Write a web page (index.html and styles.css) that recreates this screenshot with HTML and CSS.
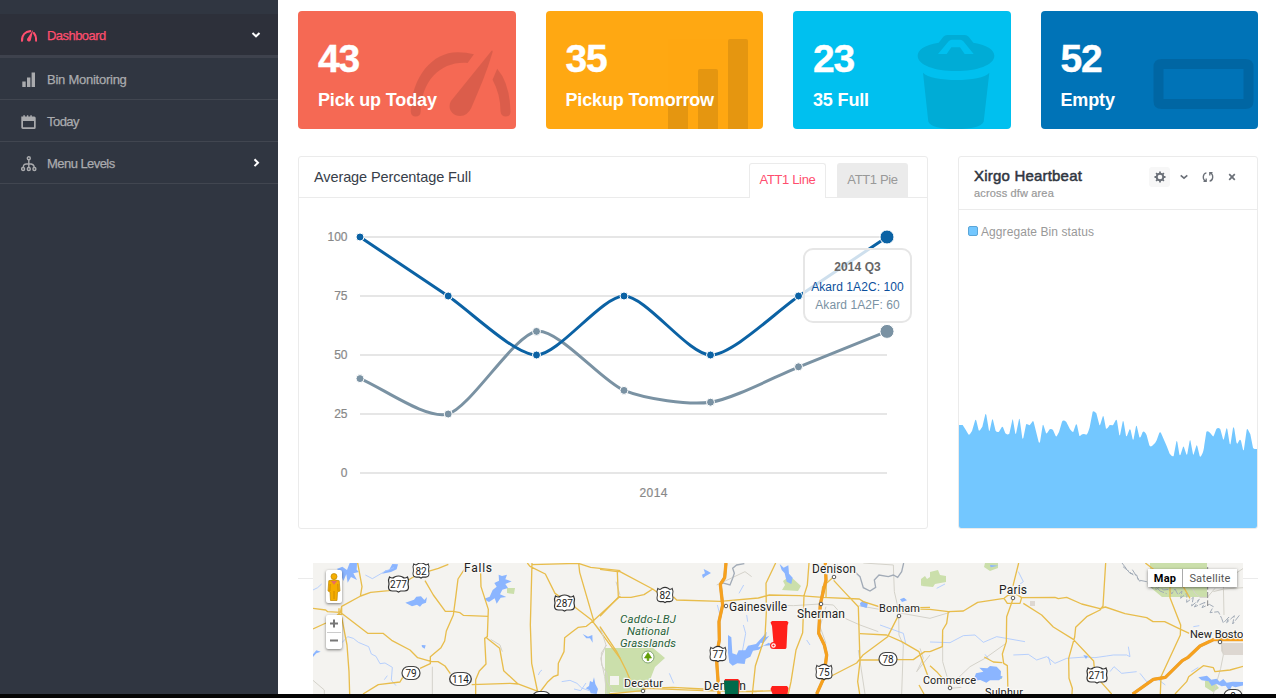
FILE: index.html
```html
<!DOCTYPE html>
<html lang="en">
<head>
<meta charset="utf-8">
<title>Dashboard</title>
<link rel="stylesheet" href="styles.css">
</head>
<body>
<div class="layout">
  <nav class="sidebar">
    <a class="nav-item active">
      <svg class="nav-icon" viewBox="0 0 16 16"><path d="M1 12.700C.9 7 4.500 3.500 9.300 3.200" fill="none" stroke="currentColor" stroke-width="2.200" stroke-linecap="round"/><path d="M12.200 1.800 9.800 12.300a2 2 0 0 1-3.800-1.200z" fill="currentColor"/><path d="M12.900 5c1.700 2 2.300 4.500 2.200 7.700" fill="none" stroke="currentColor" stroke-width="2" stroke-linecap="round"/></svg>
      <span class="nav-label">Dashboard</span>
      <svg class="nav-arrow" viewBox="0 0 10 10"><path d="M1.500 3 5 6.300 8.500 3" fill="none" stroke="currentColor" stroke-width="2"/></svg>
    </a>
    <a class="nav-item">
      <svg class="nav-icon" viewBox="0 0 16 16"><path d="M1.300 9.500h3.400V15H1.300zM6 5.500h3.400V15H6zM10.600.5H14V15h-3.400z" fill="currentColor"/></svg>
      <span class="nav-label wide">Bin Monitoring</span>
    </a>
    <a class="nav-item">
      <svg class="nav-icon" viewBox="0 0 16 16"><path d="M.3 2.500h2V1.200h1.600v1.300h2V1.200h1.400v1.300h2V1.200h1.500v1.300h2.400q1.500 0 1.500 1.500v9.500q0 1.500-1.500 1.500h-11Q.5 15 .3 13.500zM2 7v6.300h11V7z" fill="currentColor"/></svg>
      <span class="nav-label">Today</span>
    </a>
    <a class="nav-item">
      <svg class="nav-icon" viewBox="0 0 16 16"><g fill="none" stroke="currentColor" stroke-width="1.400"><circle cx="7.800" cy="2.300" r="1.500"/><circle cx="2.100" cy="13" r="1.500"/><circle cx="7.800" cy="13" r="1.500"/><circle cx="13.400" cy="13" r="1.500"/><path d="M7.800 4v7.500M2.300 11.300c0-2.800 1.600-3.600 5.500-3.600s5.400.8 5.400 3.600"/></g></svg>
      <span class="nav-label">Menu Levels</span>
      <svg class="nav-arrow" viewBox="0 0 10 10"><path d="M3.500 1.300 7 4.700 3.500 8.100" fill="none" stroke="currentColor" stroke-width="2"/></svg>
    </a>
  </nav>
  <main class="content">
    <section class="stats">
      <div class="stat red">
        <svg class="stat-icon" viewBox="298 11 218 118"><g transform="translate(290)scale(.33333)"><path d="M363 335C366 228 430 156 505 157q26 0 48 6L534 189C456 183 395 239 393 335q-1 15-15 15t-15-15z"/><path d="M606 152Q610 149 609 157C593 214 569 268 545 324Q533 348 512 348C486 348 472 324 484 303z"/><path d="M623 206Q661 250 663 335q0 15-14 15t-16-15Q633 283 609 239z"/></g></svg>
        <strong>43</strong><span>Pick up Today</span>
      </div>
      <div class="stat orange">
        <svg class="stat-icon" viewBox="546 11 217.500 118"><path d="M668 99h20v30h-20z"/><rect x="698" y="69" width="20" height="70" rx="2"/><rect x="728" y="39" width="20" height="100" rx="2"/></svg>
        <strong>35</strong><span>Pickup Tomorrow</span>
      </div>
      <div class="stat cyan">
        <svg class="stat-icon" viewBox="793 11 217.500 118"><g transform="translate(780)scale(.33333)"><path fill-rule="evenodd" d="M476 128 490 110q5-5 12-5h52q7 0 12 5l14 18c43 7 63 22 63 39 0 28-52 46-115 46s-115-18-115-46c0-17 19-32 63-39zM474 162h26l14-20h26l14 20h27L550 124q-4-5-9-5h-26q-5 0-9 5z"/><path d="M429 218C455 247 605 247 628 218L611 365Q600 387 528 387T445 365z"/></g></svg>
        <strong>23</strong><span>35 Full</span>
      </div>
      <div class="stat blue">
        <svg class="stat-icon" viewBox="1040.500 11 217.500 118"><path fill-rule="evenodd" d="M1161 59h84q8 0 8 8v34q0 8-8 8h-84q-8 0-8-8V67q0-8 8-8zm2 10v30h80V69z"/></svg>
        <strong>52</strong><span>Empty</span>
      </div>
    </section>

    <section class="panels">
      <article class="panel">
        <header class="chart-head">
          <h2>Average Percentage Full</h2>
          <div class="tabs"><a class="tab current">ATT1 Line</a><a class="tab">ATT1 Pie</a></div>
        </header>
        <div class="chart-body">
          <svg class="line-chart" viewBox="299 198 628 330">
            <path d="M360 237H887M360 296H887M360 355H887M360 414H887M360 473H887" stroke="#e6e6e6" stroke-width="2"/>
            <g class="axis" text-anchor="end"><text x="347.500" y="241">100</text><text x="347.500" y="300">75</text><text x="347.500" y="359">50</text><text x="347.500" y="418">25</text><text x="347.500" y="477">0</text></g>
            <text class="axis" x="653.500" y="497" text-anchor="middle" textLength="28">2014</text>
            <path class="series-grey" d="M360 378.600C382 387.450 426 419.900 448 414C470 408.100 514.500 334.350 536.500 331.400C558.500 328.450 602 381.550 624 390.400C646 399.250 688.500 405.150 710.500 402.200C732.500 399.250 777 375.650 799 366.800C821 357.950 865 340.250 887 331.400"/>
            <path class="series-blue" d="M360 237C382 251.750 426 281.250 448 296C470 310.750 514.500 355 536.500 355C558.500 355 602 296 624 296C646 296 688.500 355 710.500 355C732.500 355 777 310.750 799 296C821 281.250 865 251.750 887 237"/>
            <g class="dots-grey"><circle cx="360" cy="378.600" r="4"/><circle cx="448.200" cy="414" r="4"/><circle cx="536.500" cy="331.400" r="4"/><circle cx="624" cy="390.400" r="4"/><circle cx="710.500" cy="402.200" r="4"/><circle cx="798.500" cy="366.800" r="4"/><circle cx="887" cy="331.400" r="7"/></g>
            <g class="dots-blue"><circle cx="360" cy="237" r="4"/><circle cx="448.200" cy="296" r="4"/><circle cx="536.500" cy="355" r="4"/><circle cx="624" cy="296" r="4"/><circle cx="710.500" cy="355" r="4"/><circle cx="798.500" cy="296" r="4"/><circle cx="887" cy="237" r="7"/></g>
          </svg>
          <div class="tooltip"><b>2014 Q3</b><span class="tip-blue">Akard 1A2C: 100</span><span class="tip-grey">Akard 1A2F: 60</span></div>
        </div>
      </article>

      <article class="panel">
        <header class="beat-head">
          <div><h3>Xirgo Heartbeat</h3><p>across dfw area</p></div>
          <div class="tools">
            <span class="tool boxed"><svg viewBox="0 0 12 12"><circle cx="6" cy="6" r="3.300" fill="none" stroke="currentColor" stroke-width="2"/><path d="M6 .5v2M6 9.500v2M.5 6h2M9.500 6h2M2.100 2.100l1.300 1.300M8.600 8.600l1.300 1.300M2.100 9.900l1.300-1.300M8.600 3.400l1.300-1.300" stroke="currentColor" stroke-width="1.800"/></svg></span>
            <span class="tool"><svg viewBox="0 0 12 12"><path d="M2.700 4.300 6 7.200l3.300-2.900" fill="none" stroke="currentColor" stroke-width="1.600"/></svg></span>
            <span class="tool"><svg viewBox="0 0 12 12"><g fill="none" stroke="currentColor" stroke-width="1.300"><path d="M4.400 1.800C.5 2.500.3 8.500 3.500 10M7.600 10.200c3.900-.7 4.100-6.700.9-8.200M1.500 10.300h2.700V7.500M10.500 1.700H7.800v2.800"/></g></svg></span>
            <span class="tool"><svg viewBox="0 0 12 12"><path d="m3.200 3.200 5.600 5.600M8.800 3.200 3.200 8.800" stroke="currentColor" stroke-width="1.700"/></svg></span>
          </div>
        </header>
        <div class="beat-body">
          <div class="legend"><i></i><span>Aggregate Bin status</span></div>
          <svg class="area" viewBox="27 30 894 354" preserveAspectRatio="none"><path d="M27 75H38L47 89 55 103Q57 106 60 102L66 93 75 62Q77 57 79 62L86 91Q88 93 91 89L97 80 106 43Q107 40 109 45L117 92H119L126 60Q127 56 129 60L137 93Q142 98 147 95L155 82Q157 79 159 82L166 100Q172 106 178 101L187 60Q188 56 189 60L196 101H198L207 58Q208 54 209 58L217 115Q218 118 220 114L228 74Q229 71 232 73L239 76 247 65Q249 61 251 66L266 126Q268 131 270 126L278 76Q279 72 281 77L288 99Q290 102 292 98L299 88Q304 85 309 90L317 108Q319 111 321 107L327 96 336 65Q340 58 349 66L360 88Q368 98 370 95L377 75Q379 71 381 75L388 107Q390 110 393 105Q400 100 409 104Q413 104 419 82L428 35Q431 31 439 40L448 74Q449 78 451 73L458 50Q459 46 461 50L468 86Q470 89 479 75L489 76 497 61Q499 57 501 62L508 106H510L518 65Q519 61 521 66L528 107Q530 111 532 105L538 89Q540 85 542 91L548 118Q550 121 551 116L558 79Q560 75 561 81L568 111Q570 115 573 109L578 96Q583 91 590 106L598 136Q600 141 606 138Q617 130 620 121L628 98Q631 94 634 101L650 138 659 161Q668 172 671 168L679 125Q680 120 682 126L688 163Q690 169 692 163L699 141Q701 137 702 142L709 163Q711 166 712 161L719 122Q721 118 722 125L729 163Q731 167 732 160L739 137Q740 133 742 139L749 168Q751 173 755 165Q761 155 763 134L769 96Q771 91 780 98L788 108Q790 111 792 106L799 87Q805 81 811 88L819 117Q821 121 822 116L829 86Q830 82 832 88L839 131Q841 136 842 130L849 84Q851 79 853 87L859 126Q861 133 863 130L868 121Q870 117 873 122L879 149Q881 154 882 147L890 90Q891 85 894 89L901 103 909 143Q911 147 915 147H921V384H27Z"/></svg>
        </div>
      </article>
    </section>

    <section class="map-row">
      <div class="map">
        <svg class="map-canvas" viewBox="313 563 930 131">
          <defs>
            <g id="us-shield"><path d="M-9-7Q-6-5-4-7Q0-9 4-7Q6-5 9-7L10-4Q9 0 10 3Q10 7 6 7H2L0 8-2 7H-6Q-10 7-10 3Q-9 0-10-4Z" fill="#fff" stroke="#333" stroke-width="1.200"/></g>
            <g id="state-shield"><rect x="-9" y="-6.500" width="18" height="13" rx="6.500" fill="#fff" stroke="#444" stroke-width="1.200"/></g>
          </defs>
          <rect x="313" y="563" width="930" height="131" fill="#f4f3f0"/>
          <g class="park">
            <path d="M606 648H653L665 658 655 667 650 680 641 692H610V685H619V676H606Z"/>
            <path d="M605 648h5v46h-5zM783 581l7-5 11 10-3 5-16-1 3-5zM507 588h8l-1 6-7-1zM742 650l6 7-6 3z"/>
            <path d="M930 572l8-2 2 5 6 1v6l-11 2-2 3-11-1 2-6h6zM985 563h13v5l-8 3-6-4zM1150 563h57v34h-45l-12-10z"/>
            <path d="M921 579l4-3 2 3 3-2v8l-5-2-4 3zM988 674l14 2v3l-14 1zM1205 681l8 0 6 7-6 4-8-5z"/>
          </g>
          <path fill="#ddd7d1" d="M1221 643h22v12h-19l-3-4zM1030 601h5v5h-5z"/>
          <g transform="translate(290 555)scale(.33333)">
            <g class="water"><path d="M157 35l14 10 8-21h22l-1 20 7 7-17 4 11 20-18-9-10 17-4-25-9 20-8-21-9 5 7-14-10-6zM346 143l26-9 7-9 14-1 10 11 8-9-3 17-11 4-7 8-9-6-15 5zM583 131l16-6 9-20 12-10-7-11 14-7-1-18 10 4 15-4-5 14 19 6-19 8 8 12-17 5-7 14 19 8-17 2-12 18-6-16-17 11-7-4zM297 45l10-18 17 1-4 15-17 8-27 5 11-10zM878 237l16 8 13-5 1 23-8-13-11 0zM69 298l10-12 13 4-13 5-10 11zM395 270l12 1-3 10-8-5z"/></g>
            <path class="stream" d="M69 105 83 98 95 87M156 263 173 245 190 250 205 262 236 275 244 297 258 304 270 326 285 324 307 337 304 375 318 392M226 60 247 71 285 49 312 38M745 360 750 350 756 345M815 380 840 376 861 385 875 399 900 408M283 374 292 362M852 402l20 5 16-23"/>
            <path class="water" d="M887 400l10-7 3-15 8 4 4-15 4 20 8 15-4 15-18-2-3-9zM610 207h8zM777 392h5z"/>
            <path class="minor" d="M69 376 103 405V420M427 335V417M602 253 630 270 637 290M950 270 934 294 935 330 950 355 953 382 970 410M978 80 990 120M913 205 930 225 942 245"/>
            <path class="road" d="M69 160 107 165 113 170 151 172 233 235H279L305 256 360 285 383 308 425 320H444L465 333 481 356M69 222 108 204 135 187 151 172 155 154 212 123 242 112 297 107 331 90 365 69 385 58 445 40 475 28M203 24 216 95 211 124M147 160 147 178H155V157M155 187 171 270 177 350 179 417M405 77 430 120 466 169H490L510 173 520 181 595 184M525 40 504 72 497 128 490 180 469 228 464 258 453 278 421 305V326L390 340M338 367 330 381 265 389 219 417M571 24 573 95 595 163 592 245 584 250 588 327 568 348 557 374 557 417M590 249 629 280 641 347 684 387 748 411M545 389 660 385 684 387M726 24 721 210 725 325 743 411M712 24 720 34 766 57 795 115 857 158 904 194 991 311M726 29 865 25 902 37 991 47M866 24 869 52 912 200M991 123 910 197 889 214 865 217 847 230 824 248 822 290 805 325 804 360 790 365 772 382 750 411"/>
          </g>
          <g transform="translate(600 555)scale(.33333)">
            <path class="minor" d="M0 215 18 270 2 310 14 365 20 417M455 65 435 50 350 90M500 150 580 152 660 147 700 150 735 190 780 210 835 230M776 152 990 190M790 24 880 30 883 110 897 170M896 180 897 240 910 270 905 417M775 285 795 417M960 280 970 310 950 350 990 300M678 155 660 215 678 265"/>
            <path class="river" d="M362 82 390 90 398 70 403 55 398 40 410 30 433 26M710 30 730 47 760 46 780 65 790 98 810 108 827 97 823 75 837 60 865 65 880 60 893 67 905 50 911 24"/>
            <path class="stream" d="M352 150 360 180 359 220M417 115 431 90M440 180 443 200M430 210 437 235 427 290M208 355 221 385M424 380 435 410M620 255 630 270M840 210 910 235M910 235 917 265"/>
            <path class="water" d="M539 27l12 11 14-7 2 25 11 12-4 19-14-7-6-25-9-10zM384 240l10 7 3 48 13 4 6-13 20 0 8-14 24-5 20-22 12-15-2 17 10-5-18 23-8-2-8 14 15-5 18-9 8 8-24 1-15 12-17 3-8 18-14 7-3 15-22-2-14 7-10-9-4-30zM306 59l9-4-4-13 12 6 10 6-17 10-7 6zM780 145l8-8 16 7-4 15-18-5zM900 133l12-5 9 8-15 5z"/>
            <path class="road" d="M0 184 55 127 52 50 0 43M55 127H93L132 119 158 102 60 50 52 50M158 102 180 118M220 125 230 135 361 139 475 129 508 120 598 122 668 127 778 132 790 140 850 159 990 163M0 215 50 290 78 345 100 397M128 400 218 397 310 402 373 407M28 417 128 407 140 400 310 407 417 410 530 407M527 24 498 85 499 172 495 245 480 290 466 333 457 417M627 24 622 90 612 122 608 233 588 285 573 380 565 417M679 65 678 128M701 65 668 95 661 147M701 76 735 113 775 155 780 320 773 380 779 417M895 182 863 245 790 299 770 324 671 375M780 236 860 240 905 260 957 290 990 380M780 315H838M888 314H940L974 290H990M417 410H470M957 390 972 417M990 157 850 160"/>
            <path class="highway-edge" d="M378 24 374 68 361 88 368 150 357 200 358 255 349 305 357 417M676 24 678 75 661 147 656 235 673 270 680 300 671 370 650 417"/>
            <path class="highway" d="M378 24 374 68 361 88 368 150 357 200 358 255 349 305 357 417M676 24 678 75 661 147 656 235 673 270 680 300 671 370 650 417"/>
          </g>
          <g transform="translate(930 555)scale(.33333)">
            <path class="minor" d="M0 190 60 172M38 240 38 320 60 395M60 400 94 397M60 392 120 335 165 310 228 265M232 417 240 407M873 255 880 300 872 340 850 417M940 40 880 80 882 180M850 110 882 102 940 98M780 85 795 115 810 127H832L855 100M755 95 770 80"/>
            <path class="river thin" d="M576 24 600 55 620 60 625 75 650 80 665 98 680 103 690 94 700 105 718 103 725 117 735 102 744 119 756 108 752 130 771 113 770 142 790 127 785 153 808 133 793 156 825 142 816 158 838 148 850 155 840 173 865 170 875 190 880 204 897 186 890 203 913 182 908 207 928 181M579 35 610 60M607 44 630 80M665 82 690 108 710 116"/>
            <path d="M833 36V153" stroke="#888" stroke-width="3" stroke-dasharray="18 7" fill="none"/>
            <path class="stream" d="M0 261 60 263 100 242 135 240 160 262 200 245 285 260M250 300 295 298 320 315 350 305 375 325 410 310 467 306 495 308 530 303 550 300 590 300 600 305 595 275M540 350 552 335 575 355 620 350M630 355 650 380 680 370 706 390M20 100 45 87M265 50 280 80 260 95M784 350 805 337M790 215 808 212M165 298 178 315M355 305 362 330"/>
            <path class="water" d="M138 355l22-5-12-12 24 2 8-7 20 2 13 14-1 14 7 2-12 11-27 0-11 7-18-8-21 2zM180 30l25 2-23 5zM805 367l26-5 13 12 16-3 9 9 11-8 10 11 18-3 32 1v10l-24 6-10-4-8 14-11-15-12 2-16-8-14 7-9-14-21-3zM460 300l14 3-6 9z"/>
            <path class="road" d="M0 163 55 170 100 168 143 142 222 130 234 121 260 118 275 128 375 127 385 131 410 127 455 147 510 161 526 156 585 176 650 188 669 200 704 200 752 223 778 235M266 24 250 88V98M222 130 232 145 270 145 275 128M280 145 335 180 370 216 430 253 491 318 493 340M527 24 519 153 510 165 470 185 437 217 434 246 416 310 417 370 427 400 426 417M55 170 50 205 38 225 37 275 0 290M248 135 230 185 229 260 217 297 221 325 232 332 234 417M217 323 190 321 163 306M646 24 680 50 720 85V128L752 210 751 240 693 365 691 417M512 380 545 417M735 417 770 380 776 365 820 332 850 338 855 350 900 345 940 334M0 332 20 350 60 395M760 95 780 130"/>
            <path class="highway-edge" d="M608 417 670 373 706 367 757 317 773 308 810 273 850 254H940"/>
            <path class="highway" d="M608 417 670 373 706 367 757 317 773 308 810 273 850 254H940"/>
          </g>

          <g class="shields">
            <use href="#us-shield" transform="translate(421 570.500)scale(.8 .95)"/><text x="421" y="574.500">82</text>
            <use href="#us-shield" x="398.500" y="584"/><text x="398.500" y="588">277</text>
            <use href="#us-shield" x="564.500" y="603"/><text x="564.500" y="607">287</text>
            <use href="#us-shield" transform="translate(665 595)scale(.8 .95)"/><text x="665" y="599">82</text>
            <use href="#us-shield" transform="translate(718 654)scale(.8 .95)"/><text x="718" y="658">77</text>
            <use href="#us-shield" transform="translate(824 672)scale(.8 .95)"/><text x="824" y="676">75</text>
            <use href="#us-shield" x="1097" y="675"/><text x="1097" y="679">271</text>
            <use href="#state-shield" x="411" y="673"/><text x="411" y="677">79</text>
            <use href="#state-shield" transform="translate(460.500 679)scale(1.200 1)"/><text x="460.500" y="683">114</text>
            <use href="#state-shield" x="888" y="659"/><text x="888" y="663">78</text>
            <use href="#state-shield" x="541.500" y="698"/><use href="#state-shield" x="1233" y="696"/><text x="1233" y="700">8</text>
          </g>
          <g class="towns"><circle cx="726" cy="606" r="1.800"/><circle cx="834" cy="577" r="1.800"/><circle cx="821" cy="604" r="1.800"/><circle cx="899" cy="616" r="1.800"/><circle cx="1013" cy="598" r="1.800"/><circle cx="643" cy="691" r="1.800"/><circle cx="950" cy="688" r="1.800"/><circle cx="1220" cy="642" r="1.800"/></g>
          <g class="places">
            <text x="464" y="572" textLength="28">Falls</text>
            <text x="729" y="610.500" textLength="58">Gainesville</text>
            <text x="812" y="572.500" textLength="44">Denison</text>
            <text x="797" y="617.500" textLength="48">Sherman</text>
            <text class="small" x="879" y="612" textLength="41">Bonham</text>
            <text x="999" y="593.500" textLength="28">Paris</text>
            <text class="small" x="624" y="687" textLength="39">Decatur</text>
            <text x="704" y="689.500" textLength="42">Denton</text>
            <text class="small" x="923" y="684" textLength="53">Commerce</text>
            <text class="small" x="985" y="696" textLength="38">Sulphur</text>
            <text class="small" x="1190" y="638">New Boston</text>
          </g>
          <g class="forest"><text x="620" y="623" textLength="56">Caddo-LBJ</text><text x="627" y="635" textLength="42">National</text><text x="620" y="647" textLength="56">Grasslands</text></g>
          <circle cx="648" cy="657" r="6" fill="#fff" stroke="#85a775"/><path d="m648 652.500 3.500 5.500h-2.700v2.500h-1.600V658h-2.700z" fill="#629d05" stroke="#629d05" stroke-width=".7"/>
          <g fill="#ff201b">
            <path d="M772 621h15l1.500 1.500-1 3-1 22q-.3 1.500-1.500 1.500h-11L772 626l-1.500-3.500z"/>
            <circle cx="773.500" cy="645.500" r="3.500"/><circle cx="773.500" cy="645.500" r="1.700" fill="#ff201b" stroke="#fff" stroke-width="1.200"/>
            <path d="M772 686h15l1.500 2-1 6h-15l-2-5z"/>
            <path d="M725 679h13l2 2-1 13h-3l-12-12z"/>
          </g>
          <path d="M724 680.500h14.500v14H725z" fill="#006b4b"/>
        </svg>
        <div class="street"><svg viewBox="0 0 16 30"><g fill="#f5ae00" stroke="#bd8700" stroke-width=".7"><path d="M2.800 8.700Q8 7 13.200 8.700L14 19l-2.500 1-.5 8.500H4.500L4 20l-2-1z"/><circle cx="8" cy="4.500" r="3"/></g><path d="m5 9 3 3.800L11 9z" fill="#e76b65"/><path d="M8 19v8M4.200 12l-.3 7M11.800 12l.2 7" stroke="#c98500" stroke-width=".8"/></svg></div>
        <div class="zoomer"><svg viewBox="0 0 16 34"><path d="M4 8.500h8M8 4.500v8M4 25.500h8" stroke="#777" stroke-width="2"/><path d="M1 17.500h14" stroke="#ccc"/></svg></div>
        <div class="map-types"><b>Map</b><span>Satellite</span></div>
      </div>
    </section>
  </main>
</div>
<footer class="bottom-strip"></footer>
</body>
</html>
```
FILE: styles.css
```css
* { box-sizing: border-box; }
body { margin: 0; height: 698px; overflow: hidden; background: #fff; font: 13px "Liberation Sans", Arial, sans-serif; color: #8a8a8a; }
h2, h3, p { margin: 0; }
svg { display: block; }
.layout { display: flex; height: 694px; overflow: hidden; }
.bottom-strip { height: 4px; background: #050505; }

.sidebar { width: 278px; flex: none; padding-top: 14px; background: #303641; }
.nav-item { display: flex; align-items: center; height: 42px; padding: 2px 17px 0 21px; color: #aaabae; border-bottom: 1px solid #414650; }
.nav-item.active { height: 44px; background: #2d303a; color: #ff4e6e; border-bottom: 3px solid #3e424d; }
.nav-icon { width: 16px; height: 16px; margin-right: 10px; flex: none; }
.nav-label { flex: 1; letter-spacing: -.6px; -webkit-text-stroke: .25px currentColor; }
.nav-label { letter-spacing: -.55px; }
.nav-label.wide { letter-spacing: -.25px; }
.nav-arrow { width: 10px; height: 10px; margin-top: -2px; color: #fff; }

.content { flex: 1; padding: 11px 18px 0 20px; }
.stats { display: grid; grid-template-columns: repeat(4, 1fr); gap: 30px; }
.stat { position: relative; height: 118px; padding: 26px 20px 0; border-radius: 4px; overflow: hidden; color: #fff; display: flex; flex-direction: column; }
.stat strong { position: relative; font-size: 39px; line-height: 44px; letter-spacing: -1.2px; -webkit-text-stroke: .4px #fff; }
.stat span { position: relative; margin-top: 7px; font-size: 18px; line-height: 24px; font-weight: bold; letter-spacing: -.15px; white-space: nowrap; }
.stat-icon { position: absolute; inset: 0; width: 100%; height: 100%; fill: #000; opacity: .1; }
.red { background: #f56954; }
.orange { background: #ffa812; }
.cyan { background: #00c0ef; }
.blue { background: #0073b7; }

.panels { display: grid; grid-template-columns: 630px 300px; gap: 30px; margin-top: 27px; }
.panel { height: 373px; border: 1px solid #ebebeb; border-radius: 3px; overflow: hidden; }
.chart-head { display: flex; justify-content: space-between; height: 41px; padding: 0 19px 0 15px; border-bottom: 1px solid #ebebeb; }
.chart-head h2 { font-size: 14.500px; font-weight: normal; line-height: 40px; letter-spacing: -.1px; color: #373e4a; }
.tabs { display: flex; gap: 11px; padding-top: 6px; }
.tab { width: 71px; height: 34px; line-height: 33px; text-align: center; letter-spacing: -.35px; background: #ebebeb; border-radius: 3px 3px 0 0; color: #999; white-space: nowrap; }
.tab.current { width: 77px; height: 35px; line-height: 32px; background: #fff; border: 1px solid #ebebeb; border-bottom: 0; color: #ff4e6e; }
.chart-body { position: relative; }
.line-chart { width: 628px; height: 330px; }
.axis { font-size: 12px; fill: #888; stroke: #888; stroke-width: .2px; }
.series-blue, .series-grey { fill: none; stroke-width: 3; }
.series-blue { stroke: #0b62a4; }
.series-grey { stroke: #7a92a3; }
.dots-blue { fill: #0b62a4; stroke: #fff; }
.dots-grey { fill: #7a92a3; stroke: #fff; }
.tooltip { position: absolute; left: 504px; top: 50px; width: 109px; height: 75px; padding-top: 8px; border: 2px solid #e6e6e6; border-radius: 10px; background: rgba(255, 255, 255, .8); display: flex; flex-direction: column; align-items: center; font-size: 12px; line-height: 18px; letter-spacing: .08px; white-space: nowrap; }
.tooltip b { color: #666; margin-bottom: 2px; line-height: 18px; letter-spacing: .1px; }
.tip-blue { color: #0b4f9c; }
.tip-grey { color: #7a92a3; }

.beat-head { display: flex; justify-content: space-between; height: 53px; padding: 10px 15px 0 15px; border-bottom: 1px solid #ebebeb; }
.beat-head h3 { font-size: 15px; line-height: 18px; font-weight: normal; letter-spacing: .2px; color: #303641; -webkit-text-stroke: .5px #303641; }
.beat-head p { font-size: 11px; line-height: 16px; letter-spacing: .15px; color: #999; -webkit-text-stroke: .2px #999; }
.tools { display: flex; gap: 3px; color: #6b7078; }
.tool { width: 21px; height: 20px; display: grid; place-items: center; border-radius: 3px; }
.tool svg { width: 12px; height: 12px; }
.tool.boxed { background: #f7f7f7; }
.beat-body { display: flex; flex-direction: column; justify-content: space-between; height: 318px; }
.legend { display: flex; gap: 3px; padding: 14px 9px; font-size: 12px; line-height: 16px; letter-spacing: .08px; color: #999; }
.legend i { width: 10px; height: 10px; margin-top: 2px; border: 1px solid #5ba6d8; border-radius: 2px; background: #73c7ff; }
.area { width: 298px; height: 118px; fill: #73c7ff; }

.map-row { margin-top: 34px; padding: 0 15px; background: linear-gradient(#ebebeb, #ebebeb) 0 15px / 100% 1px no-repeat; }
.map { position: relative; height: 131px; overflow: hidden; }
.map-canvas { width: 930px; height: 131px; font-family: Roboto, sans-serif; }
.park { fill: #cbdfab; }
.water { fill: #8bb5ff; stroke: none; }
.stream { fill: none; stroke: #aac8ff; stroke-width: 2.500; }
.river { fill: none; stroke: #a2abb7; stroke-width: 4; }
.river.thin { stroke-width: 3; stroke-dasharray: 22 5; }
.minor { fill: none; stroke: #d4d2ca; stroke-width: 3; }
.road { fill: none; stroke: #e8bd4c; stroke-width: 4; stroke-linejoin: round; }
.highway-edge { fill: none; stroke: #dfa143; stroke-width: 10; stroke-linejoin: round; }
.highway { fill: none; stroke: #f7a11d; stroke-width: 8; stroke-linejoin: round; }
.shields text { font-size: 10px; text-anchor: middle; fill: #222; stroke: none; }
.towns { fill: #fff; stroke: #555; }
.places { font-size: 12px; fill: #222; stroke: #f8f7f4; stroke-width: 2.500px; paint-order: stroke; }
.places .small { font-size: 11px; }
.forest { font-size: 11.500px; font-style: italic; fill: #28623b; stroke: #f8f7f4; stroke-width: 2px; paint-order: stroke; }
.street, .zoomer { position: absolute; left: 13px; width: 16px; background: #fff; border-radius: 2px; box-shadow: 0 1px 3px rgba(0, 0, 0, .5); }
.street { top: 7px; height: 33px; }
.street svg { width: 16px; height: 30px; margin-top: 2px; }
.zoomer { top: 52px; height: 34px; }
.map-types { position: absolute; left: 835px; top: 6px; display: flex; height: 18px; font: 11px/19px Roboto, sans-serif; background: #fff; box-shadow: 0 1px 3px rgba(0, 0, 0, .5); text-align: center; color: #555; letter-spacing: .2px; }
.map-types b { width: 35px; color: #000; border-right: 1px solid #aaa; }
.map-types span { width: 54px; }
```
